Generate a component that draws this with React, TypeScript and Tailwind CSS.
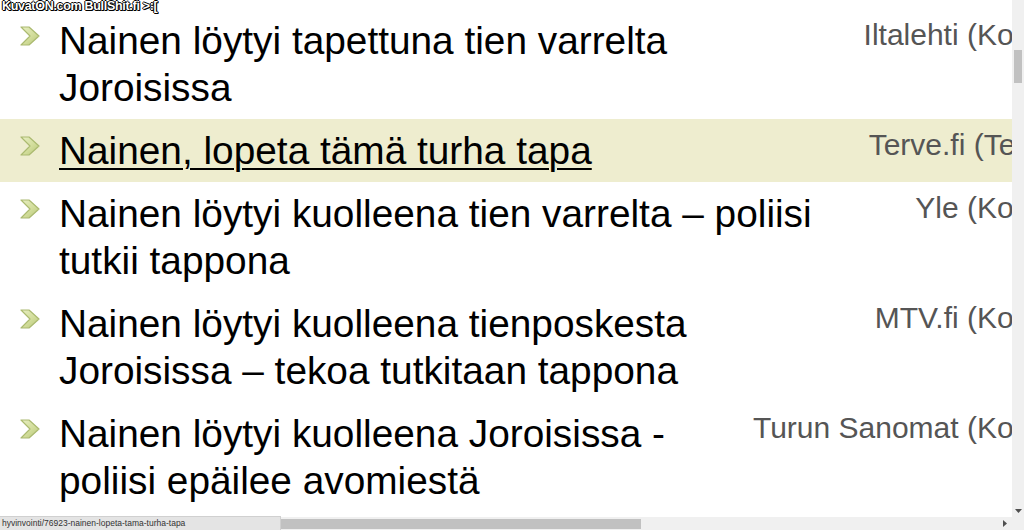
import React from "react";

type Item = { title: string; source: string; active?: boolean };

const ITEMS: Item[] = [
  { title: "Nainen löytyi tapettuna tien varrelta Joroisissa", source: "Iltalehti (Kotimaa)" },
  { title: "Nainen, lopeta tämä turha tapa", source: "Terve.fi (Terveys)", active: true },
  { title: "Nainen löytyi kuolleena tien varrelta – poliisi tutkii tappona", source: "Yle (Kotimaa)" },
  { title: "Nainen löytyi kuolleena tienposkesta Joroisissa – tekoa tutkitaan tappona", source: "MTV.fi (Kotimaa)" },
  { title: "Nainen löytyi kuolleena Joroisissa - poliisi epäilee avomiestä", source: "Turun Sanomat (Kotimaa)" },
];

// thick olive chevron used as list bullet
function Bullet() {
  return (
    <svg width="22" height="22" viewBox="0 0 22 22" className="shrink-0">
      <defs>
        <linearGradient id="chev" x1="0" y1="0" x2="1" y2="1">
          <stop offset="0" stopColor="#e8efc4" />
          <stop offset="0.55" stopColor="#d2dd9b" />
          <stop offset="1" stopColor="#b5c476" />
        </linearGradient>
        <filter id="soft">
          <feGaussianBlur stdDeviation="0.6" />
        </filter>
      </defs>
      <path
        d="M2 2 L10 2 L20 11 L10 20 L2 20 L11 11 Z"
        fill="url(#chev)"
        stroke="#abba70"
        strokeWidth="1.2"
        strokeLinejoin="round"
        filter="url(#soft)"
      />
    </svg>
  );
}

function Row({ item }: { item: Item }) {
  return (
    <div className={`flex items-start py-[8px] ${item.active ? "bg-[#eeedcf]" : ""}`}>
      <div className="w-[59px] shrink-0 pl-[19px] pt-[8px]">
        <Bullet />
      </div>
      <div className="min-w-0 flex-1 text-[38.8px] leading-[47px] text-black">
        {item.active ? (
          <span className="underline decoration-[2px] underline-offset-[4px]">{item.title}</span>
        ) : (
          item.title
        )}
      </div>
      <div className="ml-[20px] shrink-0 whitespace-nowrap pt-[1px] text-[30px] leading-[34px] text-[#555555]">
        {item.source}
      </div>
    </div>
  );
}

export default function App() {
  return (
    <div
      className="relative h-[530px] w-[1024px] overflow-hidden bg-white"
      style={{ fontFamily: '"Liberation Sans", Arial, sans-serif' }}
    >
      <div className="flex h-[517px]">
        <div className="w-[1012px] overflow-hidden">
          <div className="w-[1097px] pt-[8.5px]">
            {ITEMS.map((it) => (
              <Row key={it.title} item={it} />
            ))}
          </div>
        </div>
        <div className="relative flex w-[12px] flex-col bg-[#f0f0f0]">
          <div className="mx-[2px] mt-[50px] h-[33px] bg-[#c1c1c1]" />
          <div className="flex-1" />
          <div className="mb-[4px] flex justify-center">
            <svg width="7" height="4" viewBox="0 0 7 4">
              <path d="M0 0 L7 0 L3.5 4 Z" fill="#505050" />
            </svg>
          </div>
        </div>
      </div>
      <div className="flex h-[13px] bg-[#f0f0f0]">
        <div className="flex w-[1012px] items-center">
          <div className="ml-[281px] h-[10px] w-[360px] bg-[#c1c1c1]" />
          <div className="flex-1" />
          <svg width="4" height="7" viewBox="0 0 4 7" className="mr-[5px]">
            <path d="M0 0 L4 3.5 L0 7 Z" fill="#505050" />
          </svg>
        </div>
        <div className="w-[12px]" />
      </div>

      <div className="absolute bottom-0 left-0 flex h-[14px] w-[281px] items-center border-t border-r border-[#d0d0d0] bg-[#e4e4e4] pl-[2px] text-[8.5px] text-[#333333]">
        hyvinvointi/76923-nainen-lopeta-tama-turha-tapa
      </div>

      <div className="absolute left-[2px] top-[-3px] text-[12.5px] font-bold tracking-[-0.3px] text-white [text-shadow:_-1px_0_#000,1px_0_#000,0_1px_#000,0_-1px_#000,1px_1px_#000]">
        KuvatON.com BullShit.fi &gt;:[
      </div>
    </div>
  );
}
